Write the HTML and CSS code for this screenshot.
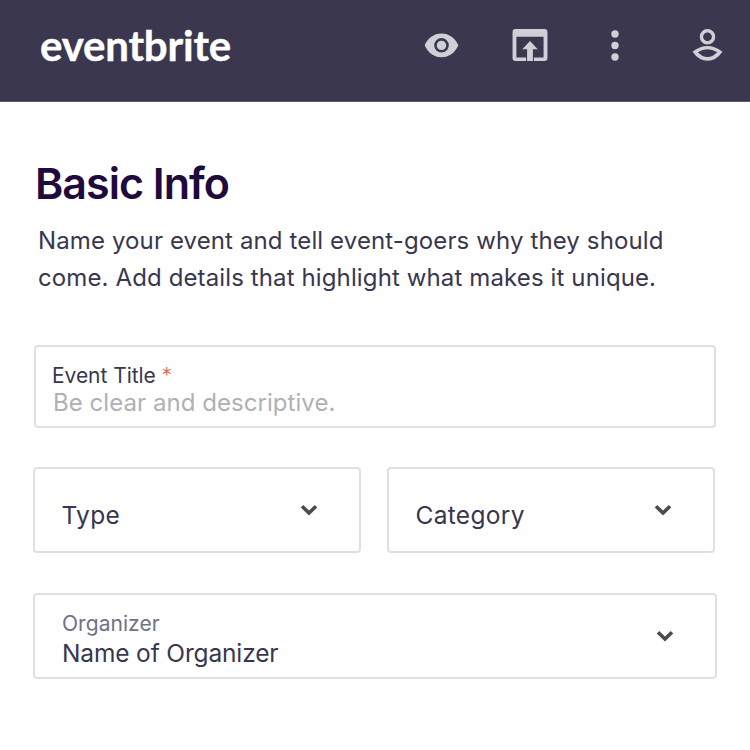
FILE: index.html
```html
<!DOCTYPE html>
<html lang="en">
<head>
<meta charset="utf-8">
<title>Basic Info</title>
<link rel="stylesheet" href="styles.css">
</head>
<body>
<header class="topbar">
  <div class="logo">eventbrite</div>
  <nav class="actions">
    <svg class="icon eye" viewBox="0 0 36 26"><path fill-rule="evenodd" d="M18 0.5C26 0.5 32.500 5.500 35.500 12.700 32.500 20 26 25.200 18 25.200 10 25.200 3.500 20 0.500 12.700 3.500 5.500 10 0.500 18 0.500ZM18 5.200A7.600 7.600 0 1 0 18 20.400 7.600 7.600 0 1 0 18 5.200ZM18 8A4.900 4.900 0 1 1 18 17.800 4.900 4.900 0 1 1 18 8Z"/></svg>
    <svg class="icon publish" viewBox="0 0 36 33"><path fill-rule="evenodd" d="M3 0H33A3 3 0 0 1 36 3V30A3 3 0 0 1 33 33H22V29.500H32V8H4V29.500H14V33H3A3 3 0 0 1 0 30V3A3 3 0 0 1 3 0Z"/><path d="M18 12.500L26 21H21V33H15V21H10Z"/></svg>
    <svg class="icon dots" viewBox="0 0 8 31"><circle cx="4" cy="4" r="3.700"/><circle cx="4" cy="15.500" r="3.700"/><circle cx="4" cy="27" r="3.700"/></svg>
    <svg class="icon user" viewBox="0 0 32 33"><path fill-rule="evenodd" d="M16 0A8 8 0 1 1 16 16 8 8 0 1 1 16 0ZM16 3.500A4.500 4.500 0 1 0 16 12.500 4.500 4.500 0 1 0 16 3.500Z"/><path fill-rule="evenodd" d="M0.500 23.500Q8 17.500 16 17.500 24 17.500 31.500 23.500 25 32.800 16 32.800 7 32.800 0.500 23.500ZM6 24Q11 21 16 21 21 21 26 24 21 29 16 29 11 29 6 24Z"/></svg>
  </nav>
</header>
<main class="content">
  <h1 class="title">Basic Info</h1>
  <p class="lead">Name your event and tell event-goers why they should come. Add details that highlight what makes it unique.</p>
  <form class="form">
    <div class="field field-title">
      <div class="small-label">Event Title <span class="req">*</span></div>
      <div class="placeholder">Be clear and descriptive.</div>
    </div>
    <div class="pair">
      <div class="field select">
        <span class="value">Type</span>
        <svg class="chev" viewBox="0 0 18 12"><path d="M2 2.200L9 9 16 2.200"/></svg>
      </div>
      <div class="field select">
        <span class="value">Category</span>
        <svg class="chev" viewBox="0 0 18 12"><path d="M2 2.200L9 9 16 2.200"/></svg>
      </div>
    </div>
    <div class="field select organizer">
      <div class="stack">
        <div class="muted-label">Organizer</div>
        <div class="value">Name of Organizer</div>
      </div>
      <svg class="chev" viewBox="0 0 18 12"><path d="M2 2.200L9 9 16 2.200"/></svg>
    </div>
  </form>
</main>
</body>
</html>
```

FILE: styles.css
```css
* { box-sizing: border-box; }
html, body { margin: 0; padding: 0; background: #fff; }
body { width: 750px; height: 750px; overflow: hidden; font-family: Inter, "Liberation Sans", sans-serif; color: #39364f; }

.topbar { height: 102px; background: #3a374f; display: flex; align-items: center; justify-content: space-between; padding: 0 27px 11px 40px; border-bottom: 1px solid #5b586e; }
.logo { font-family: Lato, "Open Sans", sans-serif; font-weight: 700; font-size: 42px; line-height: 50px; letter-spacing: -0.2px; color: #fff; -webkit-text-stroke: 0.4px #fff; }
.actions { display: flex; align-items: center; }
.icon { display: block; fill: #cfcfd6; }
.eye { width: 35px; height: 25px; margin-right: 53px; }
.publish { width: 36px; height: 32px; margin-right: 63px; }
.dots { width: 8px; height: 31px; margin-right: 73px; }
.user { width: 31px; height: 32px; }

.content { padding: 56px 34px 0; }
.title { margin: 0 0 0 1px; font-size: 43px; line-height: 50px; font-weight: 600; letter-spacing: -1px; color: #1e0a3c; }
.lead { margin: 14px 0 0 4px; font-size: 24px; line-height: 37px; letter-spacing: 0.12px; width: 670px; color: #39364f; }

.form { margin-top: 49px; display: flex; flex-direction: column; }
.field { background: #fff; border: 2px solid #e0e0e3; border-radius: 4px; }
.field-title { width: 682px; height: 83px; padding: 15px 16px 0; }
.small-label { font-size: 21px; line-height: 28px; letter-spacing: -0.05px; color: #39364f; }
.req { color: #dd6a4a; font-weight: 300; }
.placeholder { margin-left: 1px; margin-top: -1px; font-size: 24px; line-height: 28px; letter-spacing: 0.05px; color: #b0b0b6; }

.pair { display: flex; gap: 26px; margin: 39px 0 0 -1px; }
.select { display: flex; align-items: center; justify-content: space-between; }
.pair .select { width: 328px; height: 86px; padding: 0 41px 0 26.500px; }
.value { font-size: 24.500px; line-height: 30px; letter-spacing: -0.15px; color: #39364f; }
.pair .value { position: relative; top: 5px; letter-spacing: 0.3px; }
.chev { width: 18px; height: 12px; fill: none; stroke: #4b4b4b; stroke-width: 3.600; }
.organizer { width: 684px; height: 86px; margin: 40px 0 0 -1px; padding: 6px 41px 0 27px; }
.organizer .chev { margin-top: -6px; }
.muted-label { font-size: 21px; line-height: 28px; letter-spacing: 0.05px; color: #6f7287; }
.stack .value { line-height: 31px; }
```
